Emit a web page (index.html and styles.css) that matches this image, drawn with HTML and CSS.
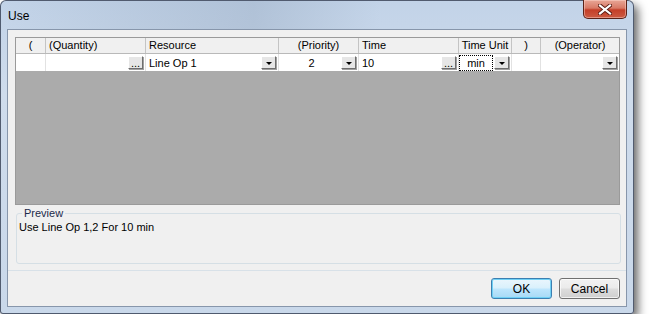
FILE: index.html
```html
<!DOCTYPE html>
<html lang="en">
<head>
    <meta charset="UTF-8">
    <title>Use</title>
    <link rel="stylesheet" href="styles.css">
</head>
<body>
    <div class="window">
        <div class="titlebar">
            <span class="title">Use</span>
            <button class="close-btn">
                <svg width="14" height="11" viewBox="0 0 14 11">
                    <path d="M2 1.5 L12 9.5 M12 1.5 L2 9.5" stroke="#5a1b12" stroke-width="4" stroke-linecap="square"/>
                    <path d="M2 1.5 L12 9.5 M12 1.5 L2 9.5" stroke="#ffffff" stroke-width="2.2" stroke-linecap="square"/>
                </svg>
            </button>
        </div>
        <div class="client">
            <div class="panel">
                <div class="grid">
                    <div class="row head">
                        <div class="cell center">(</div>
                        <div class="cell">(Quantity)</div>
                        <div class="cell">Resource</div>
                        <div class="cell center">(Priority)</div>
                        <div class="cell">Time</div>
                        <div class="cell center">Time Unit</div>
                        <div class="cell center">)</div>
                        <div class="cell center">(Operator)</div>
                    </div>
                    <div class="row data">
                        <div class="cell"></div>
                        <div class="cell"><span class="val"></span><span class="mini dots">...</span></div>
                        <div class="cell"><span class="val">Line Op 1</span><span class="mini drop"></span></div>
                        <div class="cell"><span class="val center">2</span><span class="mini drop"></span></div>
                        <div class="cell"><span class="val">10</span><span class="mini dots">...</span></div>
                        <div class="cell"><span class="val center focus">min</span><span class="mini drop"></span></div>
                        <div class="cell"></div>
                        <div class="cell"><span class="val"></span><span class="mini drop"></span></div>
                    </div>
                    <div class="empty"></div>
                </div>
                <fieldset class="preview">
                    <legend>Preview</legend>
                    <p>Use Line Op 1,2 For 10 min</p>
                </fieldset>
            </div>
            <div class="buttons">
                <button class="btn ok">OK</button>
                <button class="btn">Cancel</button>
            </div>
        </div>
    </div>
</body>
</html>
```

FILE: styles.css
```css
body { margin: 0; background: #fff; font-family: "Liberation Sans", Arial, sans-serif; font-size: 11px; }
.window {
    width: 634px;
    height: 314px;
    box-sizing: border-box;
    display: flex;
    flex-direction: column;
    border: 1px solid rgba(40, 50, 70, 0.75);
    border-radius: 6px 6px 3px 3px;
    background: linear-gradient(180deg, #c2d3e8 0%, #cfdcec 30%, #c9d8ea 100%);
    box-shadow: 4px 5px 10px rgba(0, 0, 0, 0.6);
}
.titlebar {
    height: 28px;
    display: flex;
    justify-content: space-between;
    align-items: flex-start;
    background: linear-gradient(90deg, rgba(255,255,255,0) 0%, rgba(120,140,165,0.25) 40%, rgba(255,255,255,0) 60%);
}
.title { font-size: 12px; padding: 8px 0 0 7px; color: #000; }
.close-btn {
    width: 44px;
    height: 19px;
    margin-right: 6px;
    margin-top: -1px;
    padding: 0;
    display: flex;
    align-items: center;
    justify-content: center;
    border: 1px solid #5a2218;
    border-top: none;
    border-radius: 0 0 5px 5px;
    background: linear-gradient(180deg, #e8a696 0%, #d87a66 45%, #c43f28 55%, #cc5a42 100%);
    box-shadow: inset 0 0 0 1px rgba(255, 220, 210, 0.45);
}
.client {
    flex: 1;
    margin: 0 6px 6px 6px;
    display: flex;
    flex-direction: column;
    background: #f0f0f0;
    border: 1px solid #8796ab;
}
.panel {
    padding: 7px 6px 6px 7px;
    border-bottom: 1px solid #d8e1e8;
}
.grid {
    height: 168px;
    display: flex;
    flex-direction: column;
    border: 1px solid #9a9a9a;
    box-sizing: border-box;
}
.row {
    display: grid;
    grid-template-columns: 30px 100px 133px 80px 100px 53px 29px 78px;
    box-sizing: border-box;
}
.head { height: 16px; background: #f0f0f0; border-bottom: 1px solid #b9b9b9; }
.data { height: 17px; background: #fff; }
.cell {
    border-right: 1px solid #c4c4c4;
    display: flex;
    align-items: center;
    padding: 0 3px;
    color: #000;
    white-space: nowrap;
    overflow: hidden;
}
.head .cell { line-height: 15px; }
.head .cell:last-child, .data .cell:last-child { border-right: none; }
.data .cell { border-right-color: #e2e2e2; padding: 0 1px 0 3px; }
.cell.center { justify-content: center; }
.val { flex: 1; display: flex; align-items: center; height: 14px; }
.val.center { justify-content: center; }
.val.focus { outline: 1px dotted #000; outline-offset: 0; margin: 0 2px 0 -2px; }
.mini {
    width: 15px;
    height: 13px;
    box-sizing: border-box;
    background: #e6e6e6;
    border: 1px solid;
    border-color: #fff #6e6e6e #6e6e6e #fff;
    box-shadow: 1px 1px 0 #a0a0a0;
    display: flex;
    justify-content: center;
    margin-right: 1px;
}
.dots { align-items: flex-end; line-height: 9px; font-size: 11px; }
.drop { align-items: center; }
.drop::after {
    content: "";
    border-left: 3px solid transparent;
    border-right: 3px solid transparent;
    border-top: 3px solid #000;
    margin-top: 1px;
}
.empty { flex: 1; background: #ababab; }
.preview {
    margin: 2px -1px 0 1px;
    padding: 0 2px 1px 2px;
    border: 1px solid #d5dfe5;
    border-radius: 3px;
}
.preview legend { padding: 0 2px; margin-left: 3px; color: #1c2a4a; line-height: 13px; }
.preview p { margin: 0; height: 42px; line-height: 14px; color: #000; }
.buttons {
    display: flex;
    justify-content: flex-end;
    gap: 7px;
    padding: 7px 6px 0 0;
}
.btn {
    width: 61px;
    height: 21px;
    padding: 0;
    font-family: "Liberation Sans", Arial, sans-serif;
    font-size: 12px;
    color: #000;
    border: 1px solid #707070;
    border-radius: 3px;
    background: linear-gradient(180deg, #f2f2f2 0%, #ebebeb 48%, #dddddd 52%, #cfcfcf 100%);
    box-shadow: inset 0 0 0 1px rgba(255,255,255,0.7);
}
.btn.ok {
    border-color: #3c7fb1;
    background: linear-gradient(180deg, #eaf6fd 0%, #d9f0fc 48%, #bee6fd 52%, #a7d9f5 100%);
    box-shadow: inset 0 0 0 1px #6fd0f5;
}
```
